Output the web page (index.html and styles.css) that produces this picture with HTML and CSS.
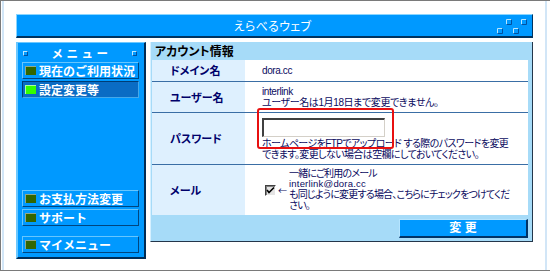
FILE: index.html
```html
<!DOCTYPE html>
<html lang="ja">
<head>
<meta charset="utf-8">
<title>えらべるウェブ</title>
<link rel="stylesheet" href="styles.css">
</head>
<body>
<div class="page">
  <div class="inner">
    <header class="titlebar">
      <span></span>
      <span class="title">えらべるウェブ</span>
      <svg class="tb-icon" width="32" height="17" viewBox="0 0 32 17">
        <g fill="none" stroke-width="1">
          <path d="M10.5 6.5V1.5H15.5" stroke="#b8e6ff"/><path d="M15.5 1.5V6.5H10.5" stroke="#0050a0"/>
          <path d="M25.5 6.5V1.5H30.5" stroke="#b8e6ff"/><path d="M30.5 1.5V6.5H25.5" stroke="#0050a0"/>
          <path d="M1.5 15.5V10.5H6.5" stroke="#b8e6ff"/><path d="M6.5 10.5V15.5H1.5" stroke="#0050a0"/>
          <path d="M17.5 15.5V10.5H22.5" stroke="#b8e6ff"/><path d="M22.5 10.5V15.5H17.5" stroke="#0050a0"/>
        </g>
      </svg>
    </header>
    <div class="main">
      <nav class="menu">
        <div class="menu-head"><span class="msq"></span><span class="mh-text">メニュー</span><span class="msq"></span></div>
        <a class="item"><span class="ico"></span>現在のご利用状況</a>
        <a class="item sel"><span class="ico"></span>設定変更等</a>
        <div class="spacer"></div>
        <a class="item"><span class="ico"></span>お支払方法変更</a>
        <a class="item"><span class="ico"></span>サポート</a>
        <a class="item last"><span class="ico"></span>マイメニュー</a>
      </nav>
      <section class="panel">
        <div class="panel-head">アカウント情報</div>
        <div class="table">
          <div class="row r1">
            <div class="label">ドメイン名</div>
            <div class="value"><div class="ln">dora.cc</div></div>
          </div>
          <div class="row r2">
            <div class="label">ユーザー名</div>
            <div class="value"><div class="ln">interlink</div><div class="ln">ユーザー名は1月18日まで変更できません。</div></div>
          </div>
          <div class="row r3">
            <div class="label">パスワード</div>
            <div class="value pw">
              <span class="input"></span>
              <div class="hint"><div class="ln">ホームページをFTPでアップロード する際のパスワードを変更</div><div class="ln">できます。変更しない場合は空欄にしておいてください。</div></div>
              <span class="redbox"></span>
            </div>
          </div>
          <div class="row r4">
            <div class="label">メール</div>
            <div class="value mail">
              <span class="check"><svg width="9" height="9" viewBox="0 0 9 9"><path d="M1 4l2 2.5L8 1.5" fill="none" stroke="#000" stroke-width="1.6"/></svg></span>
              <span class="arrow">←</span>
              <div class="mail-text"><div class="ln">一緒にご利用のメール</div><div class="ln addr">interlink@dora.cc</div><div class="ln">も同じように変更する場合、こちらにチェックをつけてくだ</div><div class="ln">さい。</div></div>
            </div>
          </div>
        </div>
        <div class="actions"><button class="btn">変 更</button></div>
      </section>
    </div>
  </div>
</div>
</body>
</html>
```

FILE: styles.css
```css
* { box-sizing: border-box; }
html, body { margin: 0; padding: 0; background: #fff; }
body {
  font-family: "Noto Sans CJK JP", sans-serif;
  font-size: 12px;
}
.page {
  width: 550px;
  height: 271px;
  border-top: 1px solid #7a7a7a;
  border-left: 1px solid #7a7a7a;
  border-bottom: 1px solid #7a7a7a;
  background: #fff;
}
.inner {
  margin-left: 1px;
  width: 545px;
  height: 269px;
  border-left: 2px solid #d2e6f7;
  border-right: 2px solid #d2e6f7;
  padding: 13px 0 0 12px;
}
.titlebar {
  width: 517px;
  height: 24px;
  background: #0099ff;
  border-top: 1px solid #8ad6ff;
  border-left: 1px solid #8ad6ff;
  border-bottom: 2px solid #00335f;
  border-right: 1px solid #00335f;
  display: grid;
  grid-template-columns: 1fr auto 1fr;
  align-items: center;
  padding-right: 4px;
}
.title {
  color: #fff;
  font-size: 12px;
  line-height: 14px;
  font-feature-settings: "palt";
  letter-spacing: 0.3px;
}
.tb-icon { justify-self: end; display: block; margin-top: 1px; }
.main {
  display: flex;
  gap: 4px;
  margin-top: 4px;
  align-items: flex-start;
}
/* menu */
.menu {
  width: 130px;
  height: 217px;
  flex: none;
  background: #0099ff;
  border-top: 1px solid #6cc8ff;
  border-left: 2px solid #6cc8ff;
  border-right: 2px solid #002c55;
  border-bottom: 2px solid #002c55;
  display: flex;
  flex-direction: column;
  padding: 0 3px 4px 4px;
}
.menu-head {
  height: 19px;
  display: flex;
  align-items: center;
  justify-content: space-between;
  padding: 1px 4px 0 1px;
}
.msq {
  width: 5px;
  height: 5px;
  border-top: 1px solid #b8e6ff;
  border-left: 1px solid #b8e6ff;
  border-bottom: 1px solid #0050a0;
  border-right: 1px solid #0050a0;
}
.mh-text {
  color: #fff;
  font-weight: bold;
  font-size: 11.5px;
  line-height: 14px;
  letter-spacing: 3.5px;
  margin-right: -3px;
}
.item {
  display: flex;
  align-items: center;
  height: 17px;
  width: 117px;
  margin-bottom: 2px;
  padding-left: 2px;
  border-top: 1px solid #66c6ff;
  border-left: 1px solid #66c6ff;
  border-bottom: 1px solid #00457f;
  border-right: 1px solid #00457f;
  color: #fff;
  font-weight: bold;
  font-size: 12px;
  line-height: 14px;
  white-space: nowrap;
}
.item.sel {
  background: #0a6cc4;
  border-top: 1px solid #003d75;
  border-left: 1px solid #003d75;
  border-bottom: 1px solid #45a8ea;
  border-right: 1px solid #45a8ea;
}
.item.last { margin-top: 8px; margin-bottom: 0; }
.ico {
  width: 11px;
  height: 9px;
  margin-right: 3px;
  background: #336600;
  border-top: 1px solid #8fa88f;
  border-left: 1px solid #8fa88f;
  flex: none;
}
.item.sel .ico { background: #33ff00; border-color: #a8ffa0; }
.spacer { flex: 1; }
/* panel */
.panel {
  width: 383px;
  height: 200px;
  flex: none;
  background: #a6dbf8;
  border-left: 1px solid #d6f0ff;
  border-right: 1px solid #24364a;
  border-bottom: 1px solid #24364a;
  display: flex;
  flex-direction: column;
}
.panel-head {
  height: 18px;
  padding: 2px 0 0 4px;
  color: #000;
  font-weight: bold;
  font-size: 12px;
  line-height: 14px;
  font-feature-settings: "palt";
}
.table {
  margin-left: 1px;
  width: 376px;
  display: flex;
  flex-direction: column;
}
.row {
  display: flex;
  border-top: 1px solid #3a6ea5;
}
.row.r1 { border-top: none; height: 21px; }
.row.r2 { height: 31px; }
.row.r3 { height: 52px; }
.row.r4 { height: 51px; }
.label {
  width: 93px;
  flex: none;
  background: #def0fe;
  display: flex;
  align-items: center;
  padding-left: 18px;
  color: #00006a;
  font-weight: bold;
  font-size: 11px;
  line-height: 13px;
  font-feature-settings: "palt";
}
.value {
  flex: 1;
  min-width: 0;
  background: #fff;
  display: flex;
  flex-direction: column;
  justify-content: center;
  padding-left: 17px;
  color: #0a0a60;
  font-family: "Liberation Sans", "Noto Sans CJK JP", sans-serif;
  font-size: 10px;
  line-height: 11px;
  font-feature-settings: "palt";
  letter-spacing: -0.4px;
  white-space: nowrap;
}
.ln { height: 11px; line-height: 11px; }
.value.pw {
  justify-content: flex-start;
  position: relative;
  padding-top: 5px;
}
.input {
  display: block;
  width: 123px;
  height: 19px;
  background: #fff;
  border-top: 2px solid #404040;
  border-left: 2px solid #404040;
  border-bottom: 1px solid #d4d0c8;
  border-right: 1px solid #d4d0c8;
}
.hint { margin-top: 1px; letter-spacing: -0.6px; }
.redbox {
  position: absolute;
  left: 12px;
  top: -5px;
  width: 137px;
  height: 41px;
  border: 2px solid #e81010;
  border-radius: 3px;
  z-index: 2;
}
.value.mail {
  flex-direction: row;
  justify-content: flex-start;
  align-items: center;
  padding-left: 20px;
}
.check {
  width: 11px;
  height: 11px;
  background: #e4e4e4;
  border-top: 1px solid #404040;
  border-left: 1px solid #404040;
  border-bottom: 1px solid #ffffff;
  border-right: 1px solid #ffffff;
  box-shadow: inset 1px 1px 0 #808080;
  display: flex;
  align-items: center;
  justify-content: center;
  flex: none;
}
.check svg { display: block; }
.arrow {
  display: block;
  width: 10px;
  height: 11px;
  font-family: "Noto Sans CJK JP", sans-serif;
  font-size: 9px;
  line-height: 11px;
  margin: 0 1px 0 2px;
  letter-spacing: 0;
  color: #0a0a60;
}
.mail-text { letter-spacing: -0.8px; }
.mail-text .ln { height: 10.7px; line-height: 10.7px; }
.mail-text .addr { font-size: 9.5px; letter-spacing: 0.2px; }
.actions {
  display: flex;
  justify-content: flex-end;
  padding: 4px 4px 0 0;
}
.btn {
  width: 129px;
  height: 19px;
  background: #0099ff;
  border-top: 1px solid #b5e4ff;
  border-left: 1px solid #b5e4ff;
  border-bottom: 2px solid #003366;
  border-right: 2px solid #003366;
  color: #fff;
  font-family: "Liberation Sans", "Noto Sans CJK JP", sans-serif;
  font-weight: bold;
  font-size: 12px;
  line-height: 14px;
  padding: 0;
}
```
